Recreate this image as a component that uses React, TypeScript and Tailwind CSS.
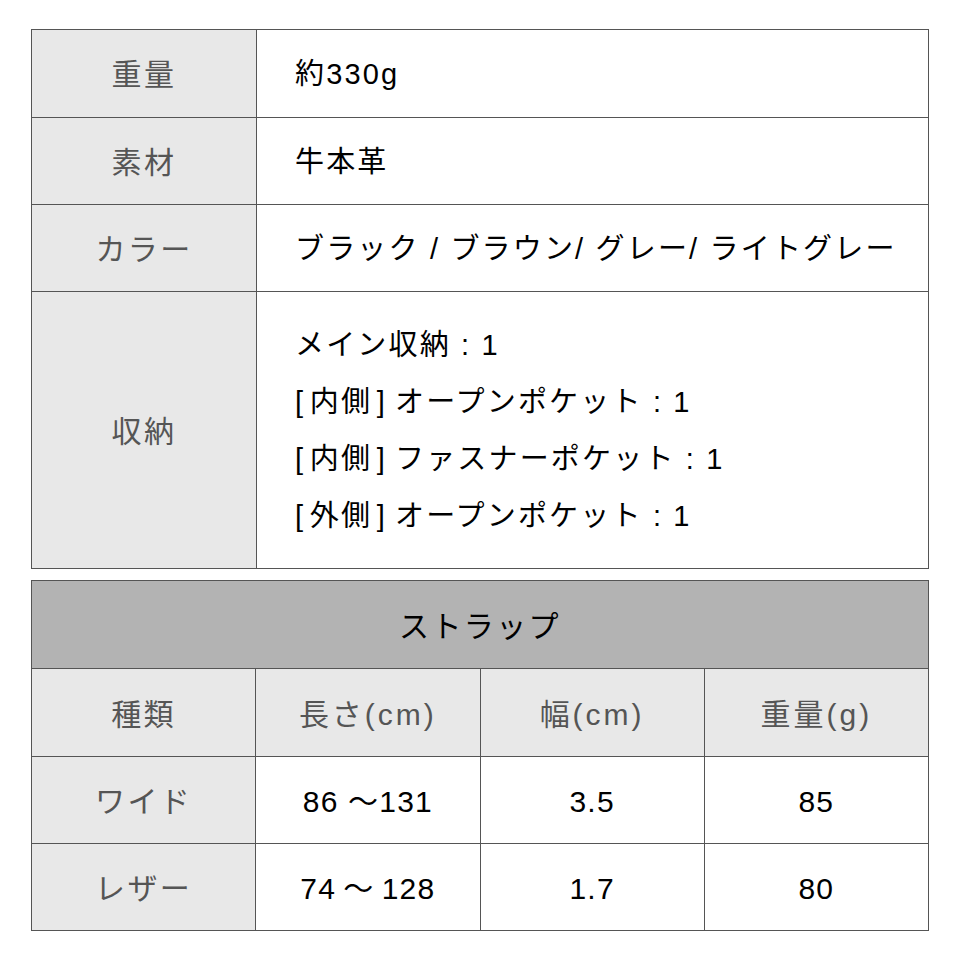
const font = { fontFamily: '"Liberation Sans", "Noto Sans CJK JP", sans-serif' }

const specs: { label: string; value: string[] }[] = [
  { label: "重量", value: ["約330g"] },
  { label: "素材", value: ["牛本革"] },
  { label: "カラー", value: ["ブラック / ブラウン/ グレー/ ライトグレー"] },
  {
    label: "収納",
    value: [
      "メイン収納 : 1",
      "[\u200a内側\u200a]\u2009オープンポケット : 1",
      "[\u200a内側\u200a]\u2009ファスナーポケット : 1",
      "[\u200a外側\u200a]\u2009オープンポケット : 1",
    ],
  },
]

const straps = [
  ["ワイド", "86 〜131", "3.5", "85"],
  ["レザー", "74\u2009〜\u2009128", "1.7", "80"],
]

export default function App() {
  return (
    <div className="w-[960px] h-[960px] bg-white px-[31px] pt-[29px]" style={font}>
      <div className="grid grid-cols-[224px_1fr] gap-px bg-[#555] border border-[#555]">
        {specs.map((s, i) => (
          <div key={s.label} className="contents">
            <div
              className={`bg-[#e8e8e8] flex items-center justify-center pt-[2px] text-[30px] text-[#555] tracking-[0.08em] ${
                i === 3 ? "h-[276px]" : i === 0 ? "h-[87px]" : "h-[86px]"
              }`}
            >
              {s.label}
            </div>
            <div className="bg-white flex flex-col justify-center pt-[2px] pl-[38px] text-[29px] text-black tracking-[0.075em] leading-[57px]">
              {s.value.map((v) => (
                <div key={v}>{v}</div>
              ))}
            </div>
          </div>
        ))}
      </div>

      <div className="mt-[11px] grid grid-cols-4 gap-px bg-[#555] border border-[#555]">
        <div className="col-span-4 h-[87px] pt-[3px] bg-[#b3b3b3] flex items-center justify-center text-[30px] text-black tracking-[0.08em]">
          ストラップ
        </div>
        {["種類", "長さ(cm)", "幅(cm)", "重量(g)"].map((h) => (
          <div
            key={h}
            className={`h-[87px] pt-[3px] bg-[#e8e8e8] flex items-center justify-center text-[30px] text-[#555] ${
              h === "種類" ? "tracking-[0.08em]" : "tracking-[0.1em]"
            }`}
          >
            {h}
          </div>
        ))}
        {straps.map((row) =>
          row.map((c, j) => (
            <div
              key={row[0] + j}
              className={`h-[86px] pt-[3px] flex items-center justify-center text-[30px] ${
                j === 0 ? "bg-[#e8e8e8] text-[#555] tracking-[0.08em]" : "bg-white text-black tracking-[0.04em]"
              }`}
            >
              {c}
            </div>
          ))
        )}
      </div>
    </div>
  )
}
